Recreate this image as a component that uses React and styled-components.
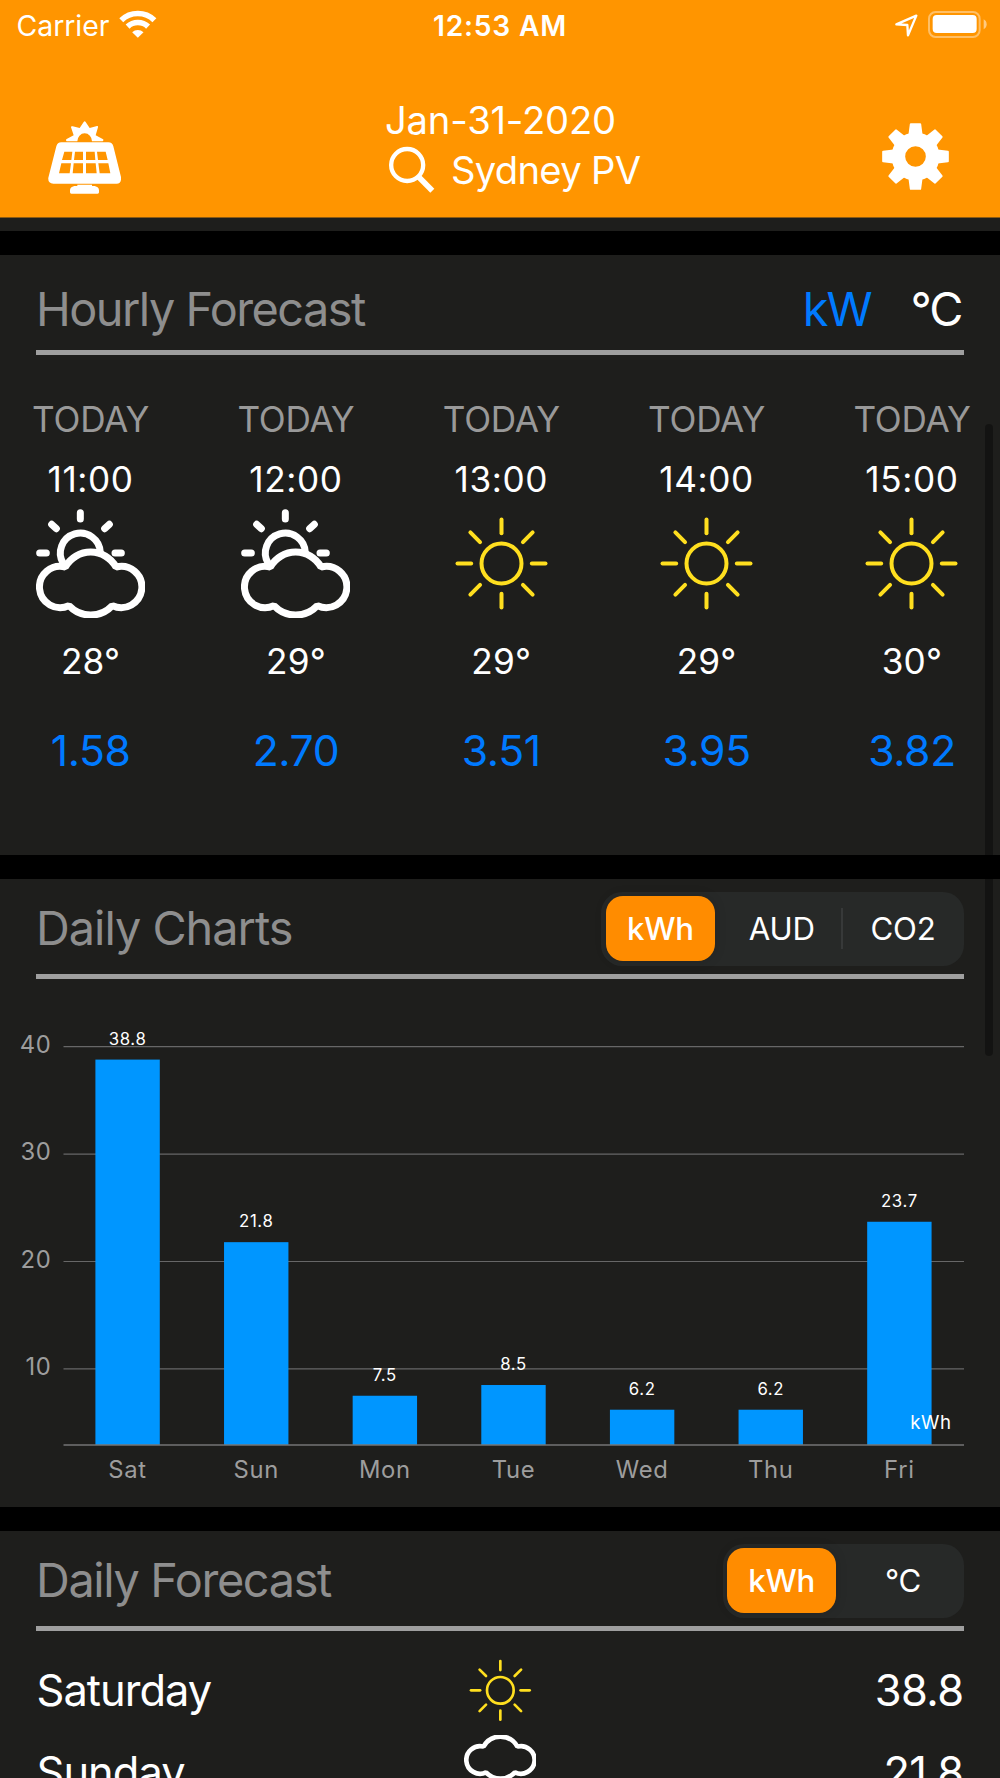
import React, { useState } from "react";
import styled, { createGlobalStyle } from "styled-components";

const GlobalStyle = createGlobalStyle`
  * {
    box-sizing: border-box;
  }

  body {
    margin: 0;
    background: #000;
    font-family: Inter, "Liberation Sans", sans-serif;
    color: #fff;
  }
`;

const Screen = styled.div`
  position: relative;
  width: 1000px;
  height: 1778px;
  overflow: hidden;
  background: #000;
`;

const Header = styled.header`
  height: 218px;
  background: #ff9500;
  border-bottom: 1px solid #8a5a14;
`;

const StatusBar = styled.div`
  display: grid;
  grid-template-columns: 1fr auto 1fr;
  align-items: center;
  height: 51px;
  padding: 0 13px;
  font-size: 28.4px;
`;

const StatusGroup = styled.div`
  display: flex;
  align-items: center;
  justify-content: ${({ $end }) => ($end ? "flex-end" : "flex-start")};
  gap: 10px;
`;

const Carrier = styled.span`
  margin-left: 3.6px;
  letter-spacing: -0.05px;
`;

const Clock = styled.span`
  font-weight: 600;
  font-size: 28.2px;
  letter-spacing: 0.8px;
`;

const WifiIcon = styled.svg`
  width: 38px;
  height: 28px;
  margin-top: -3px;
`;

const LocationIcon = styled.svg`
  width: 23px;
  height: 23px;
  margin-top: -1px;
`;

const BatteryIcon = styled.svg`
  width: 59px;
  height: 27px;
  margin-top: -2px;
`;

const NavBar = styled.div`
  display: grid;
  grid-template-columns: 337px 1fr auto;
  padding: 44px 51px 0 48px;
`;

const SolarIcon = styled.svg`
  width: 73px;
  height: 73px;
  margin-top: 25.6px;
`;

const GearIcon = styled.svg`
  width: 67px;
  height: 67px;
  margin-top: 28.2px;
`;

const Title = styled.div`
  font-size: 38.2px;
  line-height: 50px;
  white-space: nowrap;
`;

const DateText = styled.div`
  letter-spacing: -0.2px;
`;

const SiteRow = styled.div`
  display: flex;
  align-items: center;
  gap: 16px;
  padding-left: 4px;
  letter-spacing: -0.7px;
`;

const SearchIcon = styled.svg`
  width: 46px;
  height: 48px;
`;

const Strip = styled.div`
  height: 13px;
  background: #1e1e1c;
`;

const Section = styled.section`
  height: ${({ $height }) => $height}px;
  margin-top: 24px;
  background: #1e1e1c;
`;

const SectionHeader = styled.div`
  display: flex;
  align-items: center;
  justify-content: space-between;
  height: 99.8px;
  margin: 0 36px;
  padding-top: ${({ $top }) => $top}px;
  border-bottom: 5px solid #9f9f9f;
`;

const SectionTitle = styled.h2`
  margin: 0;
  font-size: 46.8px;
  font-weight: 400;
  line-height: 60px;
  letter-spacing: ${({ $tracking }) => $tracking}px;
  color: #8e8e8e;
`;

const UnitLinks = styled.div`
  display: flex;
  gap: 40px;
  padding-right: 2.5px;
  font-size: 46.8px;
  line-height: 60px;
  letter-spacing: -2px;
`;

const UnitLink = styled.span`
  color: ${({ $active }) => ($active ? "#007aff" : "#fff")};
`;

const Segments = styled.div`
  display: flex;
  height: 74px;
  margin-top: 2px;
  padding: 4.5px 6.5px 4.5px 4.5px;
  border-radius: 21px;
  background: #272928;
`;

const Segment = styled.button`
  display: flex;
  align-items: center;
  justify-content: center;
  position: relative;
  width: 109px;
  margin-left: ${({ $first }) => ($first ? 0 : 12.3)}px;
  padding: 0;
  border: none;
  border-radius: 17px;
  background: ${({ $active }) => ($active ? "#ff8c00" : "transparent")};
  box-shadow: ${({ $active }) => ($active ? "0 0 12px rgba(0, 0, 0, 0.15)" : "none")};
  color: #fff;
  font-family: inherit;
  font-size: 31.2px;
  font-weight: ${({ $active }) => ($active ? 550 : 430)};
  letter-spacing: -0.2px;

  &::before {
    content: "";
    display: ${({ $divider }) => ($divider ? "block" : "none")};
    position: absolute;
    left: -8px;
    top: 12px;
    width: 2px;
    height: 41px;
    background: #373939;
  }
`;

const HourList = styled.div`
  display: flex;
  justify-content: space-between;
  padding: 44px 30px 0 32.6px;
`;

const Hour = styled.div`
  display: flex;
  flex-direction: column;
  align-items: center;
  width: 116px;
  font-size: 35.2px;
  line-height: 40px;
  white-space: nowrap;
`;

const HourDay = styled.div`
  letter-spacing: -0.25px;
  color: #999;
`;

const HourTime = styled.div`
  margin: 20px 0 10px;
  letter-spacing: 0.6px;
`;

const HourTemp = styled.div`
  margin-top: 23px;
  letter-spacing: 0.2px;
`;

const HourPower = styled.div`
  margin-top: 45px;
  font-size: 42.7px;
  line-height: 50px;
  letter-spacing: -0.4px;
  color: #007aff;
`;

const WeatherSvg = styled.svg`
  display: block;
  width: ${({ $size }) => $size}px;
  height: ${({ $size }) => $size}px;
`;

const Chart = styled.svg`
  display: block;
  width: 1000px;
  height: 528px;
`;

const AxisText = styled.text`
  fill: #9d9d9d;
  font-size: 23.8px;
  letter-spacing: 0.7px;
`;

const ValueText = styled.text`
  fill: #fff;
  font-size: 16.8px;
  letter-spacing: 0.6px;
`;

const UnitText = styled.text`
  fill: #fff;
  font-size: 18.7px;
  letter-spacing: 0.6px;
`;

const DayList = styled.div`
  padding-top: 18.4px;
`;

const DayRow = styled.div`
  display: grid;
  grid-template-columns: 1fr 73px 1fr;
  align-items: center;
  height: 81.6px;
  margin: 0 36px;
  font-size: 43.4px;
`;

const DayName = styled.span`
  padding-left: 0.5px;
  letter-spacing: -0.95px;
`;

const DayValue = styled.span`
  padding-right: 0.5px;
  letter-spacing: -0.6px;
  text-align: right;
`;

const ScrollBar = styled.div`
  position: absolute;
  top: 424px;
  left: 985px;
  width: 8px;
  height: 632px;
  border-radius: 4px;
  background: rgba(0, 0, 0, 0.35);
`;

const hours = [
  { time: "11:00", icon: "partly", temp: 28, power: "1.58" },
  { time: "12:00", icon: "partly", temp: 29, power: "2.70" },
  { time: "13:00", icon: "sun", temp: 29, power: "3.51" },
  { time: "14:00", icon: "sun", temp: 29, power: "3.95" },
  { time: "15:00", icon: "sun", temp: 30, power: "3.82" },
];

const days = [
  { label: "Sat", value: 38.8 },
  { label: "Sun", value: 21.8 },
  { label: "Mon", value: 7.5 },
  { label: "Tue", value: 8.5 },
  { label: "Wed", value: 6.2 },
  { label: "Thu", value: 6.2 },
  { label: "Fri", value: 23.7 },
];

const forecast = [
  { name: "Saturday", icon: "sun", value: "38.8" },
  { name: "Sunday", icon: "rain", value: "21.8" },
];

const CLOUD =
  "M88 174A62 62 0 1 0 99 290A89 89 0 0 0 229 290A62 62 0 1 0 240 174A87 87 0 0 0 88 174Z";

function WeatherIcon({ name, size }) {
  if (name === "sun") {
    return (
      <WeatherSvg $size={size} viewBox="-163.5 -163.5 327 327">
        <g fill="none" stroke="#ffdf1f" strokeWidth="12" strokeLinecap="round">
          <circle r="60" />
          {[0, 45, 90, 135, 180, 225, 270, 315].map((a) => (
            <path key={a} d="M0 -91V-132" transform={`rotate(${a})`} />
          ))}
        </g>
      </WeatherSvg>
    );
  }
  if (name === "rain") {
    return (
      <WeatherSvg $size={size} viewBox="0 0 327 327">
        <g fill="none" stroke="#fff" strokeWidth="21" strokeLinecap="round">
          <path d={CLOUD} transform="translate(0 -122)" strokeLinejoin="bevel" />
          <path d="M100 240L80 300M164 255L144 315M228 240L208 300" />
        </g>
      </WeatherSvg>
    );
  }
  return (
    <WeatherSvg $size={size} viewBox="0 0 327 327">
      <g fill="none" stroke="#fff" strokeWidth="21" strokeLinecap="round">
        <path d={CLOUD} strokeLinejoin="bevel" />
        <path d="M82 164A60 60 0 1 1 193 131" strokeLinecap="butt" />
        <path d="M133 11V30M11 132H31M237 132H256M47 46L61 59M220 46L206 59" />
      </g>
    </WeatherSvg>
  );
}

function StatusIcons() {
  return (
    <StatusGroup $end>
      <LocationIcon viewBox="1186 40 69 69">
        <path
          d="M1190 71L1250 45L1225 104L1223 73Z"
          fill="none"
          stroke="#fff"
          strokeWidth="7"
          strokeLinejoin="round"
        />
      </LocationIcon>
      <BatteryIcon viewBox="1285 33 177 81">
        <rect x="1288" y="36" width="152" height="75" rx="20" fill="none" stroke="#fff" strokeOpacity="0.4" strokeWidth="6" />
        <rect x="1299" y="45" width="132" height="54" rx="12" fill="#fff" />
        <path d="M1452 58Q1461 63 1461 73T1452 88Z" fill="#fff" fillOpacity="0.5" />
      </BatteryIcon>
    </StatusGroup>
  );
}

function AppHeader() {
  return (
    <Header>
      <StatusBar>
        <StatusGroup>
          <Carrier>Carrier</Carrier>
          <WifiIcon viewBox="359 28 114 84">
            <g fill="none" stroke="#fff">
              <path d="M365.8 58.6A71.5 71.5 0 0 1 465.2 58.6" strokeWidth="17" />
              <path d="M384.8 77.9A44.5 44.5 0 0 1 446.2 77.9" strokeWidth="17" />
            </g>
            <path d="M398.5 95A24 24 0 0 1 432.5 95L415.5 111Z" fill="#fff" />
          </WifiIcon>
        </StatusGroup>
        <Clock>12:53 AM</Clock>
        <StatusIcons />
      </StatusBar>
      <NavBar>
        <SolarIcon viewBox="144 362 219 219">
          <g fill="#fff" fillRule="evenodd">
            <path d="M200 423Q196 418 200 416L221 405L213 381Q213 376 218 378L239 383L251 365Q254 361 257 365L269 383L291 377Q295 376 294 381L287 405L308 416Q313 419 308 423H276A22 24 0 0 0 232 423Z" />
            <path d="M184 426H325Q337 426 340 438L363 530Q365 550 350 550H160Q143 550 145 532L169 438Q172 426 184 426ZM193 454L186 479H214L217 454ZM225 454L222 479H249V454ZM258 454V479H286L284 454ZM291 454L294 479H323L317 454ZM184 489L177 519H209L213 489ZM221 489L218 519H249V489ZM258 489V519H290L287 489ZM295 489L299 519H331L325 489Z" />
            <path d="M232 553H276V557H284Q297 560 297 570V576Q297 580 293 580H214Q210 580 210 576V570Q210 560 223 557H232Z" />
          </g>
        </SolarIcon>
        <Title>
          <DateText>Jan-31-2020</DateText>
          <SiteRow>
            <SearchIcon viewBox="1167 438 138 144">
              <g fill="none" stroke="#fff">
                <circle cx="1221.5" cy="495" r="48" strokeWidth="13" />
                <path d="M1254 529L1297 572" strokeWidth="17" />
              </g>
            </SearchIcon>
            Sydney PV
          </SiteRow>
        </Title>
        <GearIcon viewBox="-100.5 -100.5 201 201">
          <circle r="51.5" fill="none" stroke="#fff" strokeWidth="41" />
          {[0, 45, 90, 135, 180, 225, 270, 315].map((a) => (
            <path
              key={a}
              d="M-18 -66L-14 -97H14L18 -66Z"
              transform={`rotate(${a})`}
              fill="#fff"
              stroke="#fff"
              strokeWidth="6"
              strokeLinejoin="round"
            />
          ))}
        </GearIcon>
      </NavBar>
    </Header>
  );
}

function SegmentedControl({ options }) {
  const [selected, setSelected] = useState(0);
  return (
    <Segments>
      {options.map((option, i) => (
        <Segment
          key={option}
          $first={i === 0}
          $active={i === selected}
          $divider={i > 0 && i !== selected && i - 1 !== selected}
          onClick={() => setSelected(i)}
        >
          {option}
        </Segment>
      ))}
    </Segments>
  );
}

function DailyChart() {
  const bottom = 466;
  const y = (value) => 67.7 + (40 - value) * 10.74;
  return (
    <Chart viewBox="0 0 1000 528">
      {[40, 30, 20, 10].map((tick) => (
        <g key={tick}>
          <path d={`M63.5 ${y(tick)}H964`} stroke="#676767" strokeWidth="1.2" />
          <AxisText x="51.5" y={y(tick) + 6.3} textAnchor="end">
            {tick}
          </AxisText>
        </g>
      ))}
      {days.map(({ label, value }, i) => {
        const center = 127.6 + i * 128.63;
        return (
          <g key={label}>
            <rect x={center - 32.2} y={y(value)} width="64.4" height={bottom - y(value)} fill="#0096ff" />
            <ValueText x={center} y={y(value) - 14.7} textAnchor="middle">
              {value}
            </ValueText>
            <AxisText x={center} y={bottom + 33} textAnchor="middle">
              {label}
            </AxisText>
          </g>
        );
      })}
      <path d={`M63.5 ${bottom}H964`} stroke="#747474" strokeWidth="1.5" />
      <UnitText x="951.7" y={bottom - 16.5} textAnchor="end">
        kWh
      </UnitText>
    </Chart>
  );
}

function App() {
  return (
    <Screen>
      <GlobalStyle />
      <AppHeader />
      <Strip />
      <Section $height={600}>
        <SectionHeader $top={13}>
          <SectionTitle $tracking={-1.5}>Hourly Forecast</SectionTitle>
          <UnitLinks>
            <UnitLink $active>kW</UnitLink>
            <UnitLink>°C</UnitLink>
          </UnitLinks>
        </SectionHeader>
        <HourList>
          {hours.map(({ time, icon, temp, power }) => (
            <Hour key={time}>
              <HourDay>TODAY</HourDay>
              <HourTime>{time}</HourTime>
              <WeatherIcon name={icon} size={109} />
              <HourTemp>{temp}°</HourTemp>
              <HourPower>{power}</HourPower>
            </Hour>
          ))}
        </HourList>
      </Section>
      <Section $height={628}>
        <SectionHeader $top={3}>
          <SectionTitle $tracking={-1}>Daily Charts</SectionTitle>
          <SegmentedControl options={["kWh", "AUD", "CO2"]} />
        </SectionHeader>
        <DailyChart />
      </Section>
      <Section $height={300}>
        <SectionHeader $top={3}>
          <SectionTitle $tracking={-1.35}>Daily Forecast</SectionTitle>
          <SegmentedControl options={["kWh", "°C"]} />
        </SectionHeader>
        <DayList>
          {forecast.map(({ name, icon, value }) => (
            <DayRow key={name}>
              <DayName>{name}</DayName>
              <WeatherIcon name={icon} size={72.7} />
              <DayValue>{value}</DayValue>
            </DayRow>
          ))}
        </DayList>
      </Section>
      <ScrollBar />
    </Screen>
  );
}

export default App;
